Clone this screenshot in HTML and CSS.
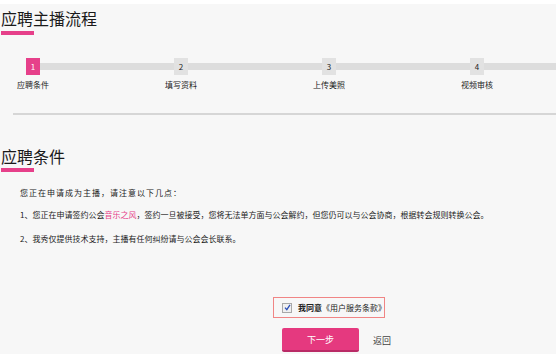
FILE: index.html
```html
<!DOCTYPE html>
<html lang="zh-CN">
<head>
  <meta charset="UTF-8">
  <meta name="viewport" content="width=device-width, initial-scale=1.0">
  <title>应聘主播流程</title>
  <link rel="stylesheet" href="styles.css">
</head>
<body>

  <div class="topbar"></div>

  <!-- Process steps -->
  <section class="process">
    <h1 class="page-title">应聘主播流程</h1>
    <div class="title-bar"></div>

    <div class="steps">
      <div class="step active">
        <span class="step-num">1</span>
        <span class="step-label">应聘条件</span>
      </div>
      <div class="step">
        <span class="step-num">2</span>
        <span class="step-label">填写资料</span>
      </div>
      <div class="step">
        <span class="step-num">3</span>
        <span class="step-label">上传美照</span>
      </div>
      <div class="step">
        <span class="step-num">4</span>
        <span class="step-label">视频审核</span>
      </div>
    </div>
  </section>

  <div class="divider"></div>

  <!-- Conditions -->
  <section class="conditions">
    <h2 class="section-title">应聘条件</h2>
    <div class="title-bar"></div>

    <div class="notice">
      <p class="notice-intro">您正在申请成为主播，请注意以下几点：</p>
      <p class="notice-item first">1、您正在申请签约公会<a href="#" class="guild">音乐之风</a>，签约一旦被接受，您将无法单方面与公会解约，但您仍可以与公会协商，根据转会规则转换公会。</p>
      <p class="notice-item">2、我秀仅提供技术支持，主播有任何纠纷请与公会会长联系。</p>
    </div>

    <label class="agree">
      <span class="check-box">
        <svg width="7" height="7" viewBox="0 0 7 7"><path d="M1 3.6 L2.8 5.6 L6 0.8" fill="none" stroke="#2a4fb8" stroke-width="1.3"/></svg>
      </span>
      <span class="agree-text"><b>我同意</b>《用户服务条款》</span>
    </label>

    <div class="actions">
      <button class="next-button">下一步</button>
      <a href="#" class="back-link">返回</a>
    </div>
  </section>

</body>
</html>
```

FILE: styles.css
```css
body {
  margin: 0;
  padding: 0;
  background-color: #f7f7f7;
  font-family: "Noto Sans CJK SC", "Noto Sans", sans-serif;
  color: #222;
}

.topbar {
  height: 4px;
  background-color: #fff;
}

.page-title,
.section-title {
  margin: 4px 0 0;
  padding-left: 1px;
  font-size: 16px;
  line-height: 20px;
  font-weight: normal;
  color: #1a1a1a;
}

.title-bar {
  width: 33px;
  height: 4px;
  margin: 3px 0 0 1px;
  background-color: #e6408a;
}

/* steps */
.steps {
  position: relative;
  display: grid;
  grid-template-columns: repeat(4, 32px);
  column-gap: 116px;
  margin-top: 23px;
  padding-left: 17px;
}

.steps::before {
  content: "";
  position: absolute;
  left: 33px;
  right: 0;
  top: 5px;
  height: 7px;
  background-color: #dddddd;
}

.step {
  position: relative;
  display: flex;
  flex-direction: column;
  align-items: center;
}

.step-num {
  width: 14px;
  height: 17px;
  line-height: 17px;
  font-size: 8px;
  text-align: center;
  background-color: #e2e2e2;
  color: #222;
}

.step.active .step-num {
  background-color: #e6408a;
  color: #fff;
}

.step-label {
  margin-top: 5px;
  font-size: 8px;
  line-height: 10px;
  white-space: nowrap;
  color: #222;
}

.divider {
  height: 2px;
  margin: 23px 0 0 13px;
  background-color: #d6d6d6;
}

/* conditions */
.section-title {
  margin-top: 31px;
}

.conditions .title-bar {
  margin-top: 2px;
}

.notice {
  padding-left: 20px;
  font-size: 8px;
  line-height: 12px;
}

.notice p {
  margin: 0;
  white-space: nowrap;
}

.notice-intro {
  margin-top: 15px !important;
  letter-spacing: 1px;
}

.notice-item.first {
  margin-top: 10px !important;
}

.notice-item {
  margin-top: 12px !important;
}

.guild {
  color: #e6408a;
  text-decoration: none;
}

.agree {
  display: flex;
  align-items: center;
  gap: 6px;
  margin: 52px 0 0 273px;
  width: 112px;
  height: 21px;
  box-sizing: border-box;
  padding-left: 8px;
  border: 1px solid #f08585;
  font-size: 8px;
  white-space: nowrap;
  color: #222;
}

.check-box {
  flex: none;
  display: flex;
  align-items: center;
  justify-content: center;
  width: 8px;
  height: 8px;
  border: 1px solid #a8a8a8;
  background-color: #f0f0f0;
}

.agree-text b {
  font-weight: bold;
}

.actions {
  display: flex;
  align-items: center;
  gap: 14px;
  margin: 10px 0 0 282px;
}

.next-button {
  width: 77px;
  height: 24px;
  padding: 0;
  border: none;
  border-bottom: 2px solid #b92a66;
  border-radius: 2px;
  background-color: #e5397f;
  color: #fff;
  font-family: inherit;
  font-size: 9px;
  cursor: pointer;
}

.back-link {
  font-size: 9px;
  color: #444;
  text-decoration: none;
}
```
